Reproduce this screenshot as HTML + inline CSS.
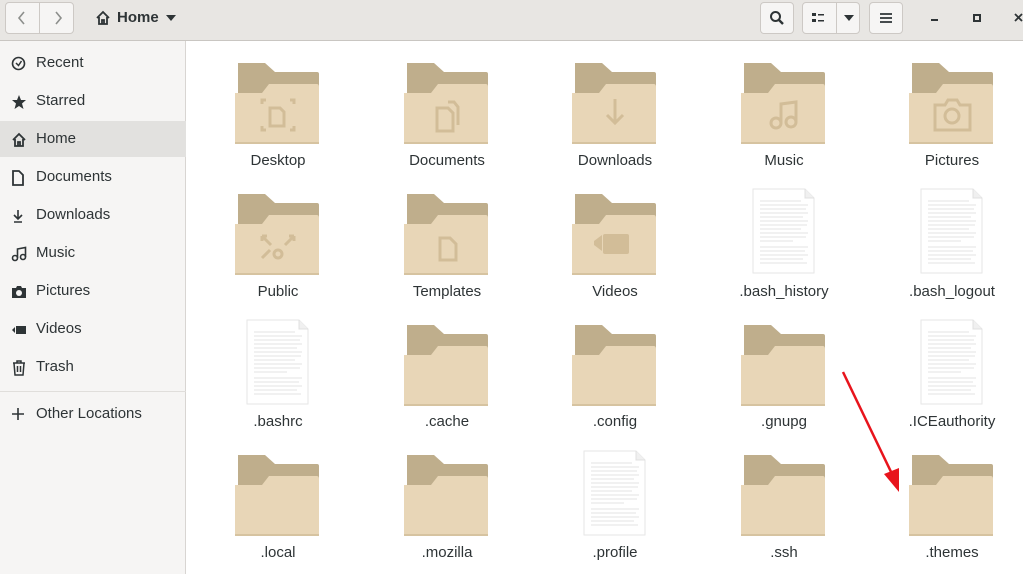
<!DOCTYPE html>
<html><head><meta charset="utf-8"><style>
*{margin:0;padding:0;box-sizing:border-box}
body{width:1023px;height:574px;overflow:hidden;font-family:"Liberation Sans","DejaVu Sans",sans-serif;background:#fff;position:relative;color:#2e3436}
.hdr{position:absolute;left:0;top:0;width:1023px;height:41px;background:#e8e6e3;border-bottom:1px solid #c9c6c2}
.btn{position:absolute;top:2px;height:32px;background:#f6f5f4;border:1px solid #cdc9c5;border-radius:4px}
.side{position:absolute;left:0;top:41px;width:186px;height:533px;background:#f6f5f4;border-right:1px solid #d8d5d2}
.it{position:absolute;left:0;width:186px;height:36px;font-size:15px;line-height:36px;padding-left:36px}
.it svg{position:absolute;left:11px;top:11px}
.sel{background:#e2e1df}
.lbl{position:absolute;width:160px;text-align:center;font-size:15px;color:#2e3436}
.ic{position:absolute}
</style></head><body>
<div class="hdr">
 <div class="btn" style="left:5px;width:69px"></div>
 <div style="position:absolute;left:39px;top:3px;width:1px;height:31px;background:#cdc9c5"></div>
 <svg class="ic" style="left:14px;top:9px" width="60" height="18"><path d="M10 3 L5 9 L10 15" stroke="#8d8f8c" stroke-width="1.6" fill="none"/><path d="M42 3 L47 9 L42 15" stroke="#8d8f8c" stroke-width="1.6" fill="none"/></svg>
 <svg class="ic" style="left:95px;top:10px" width="16" height="16"><path d="M2 8 L8 2 L14 8 M4 7 V14 H12 V7 M7 14 V10 H9 V14" stroke="#2e3436" stroke-width="1.8" fill="none"/></svg>
 <div style="position:absolute;left:117px;top:9px;font-size:15px;font-weight:bold;color:#2e3436">Home</div>
 <svg class="ic" style="left:165px;top:14px" width="12" height="8"><path d="M1 1 H11 L6 7Z" fill="#2e3436"/></svg>
 <div class="btn" style="left:760px;width:34px"></div>
 <svg class="ic" style="left:768px;top:9px" width="18" height="18"><circle cx="7.5" cy="7.5" r="4.5" stroke="#2e3436" stroke-width="2" fill="none"/><path d="M11 11 L15 15" stroke="#2e3436" stroke-width="2.4"/></svg>
 <div class="btn" style="left:802px;width:58px"></div>
 <div style="position:absolute;left:836px;top:3px;width:1px;height:31px;background:#cdc9c5"></div>
 <svg class="ic" style="left:812px;top:12px" width="16" height="12"><rect x="0" y="1" width="4" height="3" fill="#2e3436"/><rect x="0" y="7" width="4" height="3" fill="#2e3436"/><rect x="6" y="2" width="6" height="1.5" fill="#2e3436"/><rect x="6" y="8" width="6" height="1.5" fill="#2e3436"/></svg>
 <svg class="ic" style="left:843px;top:14px" width="12" height="8"><path d="M1 1 H11 L6 7Z" fill="#2e3436"/></svg>
 <div class="btn" style="left:869px;width:34px"></div>
 <svg class="ic" style="left:879px;top:11px" width="14" height="14"><path d="M1 3H13M1 7H13M1 11H13" stroke="#2e3436" stroke-width="1.7"/></svg>
 <div style="position:absolute;left:931px;top:19px;width:7px;height:2px;background:#2e3436"></div>
 <div style="position:absolute;left:973px;top:14px;width:8px;height:8px;border:2px solid #2e3436"></div>
 <svg class="ic" style="left:1014px;top:13px" width="9" height="9"><path d="M1 1 L8 8 M8 1 L1 8" stroke="#2e3436" stroke-width="1.8"/></svg>
</div>
<div class="side">
 <div class="it" style="top:4px"><svg width="15" height="15"><circle cx="7.5" cy="7.5" r="6" stroke="#2e3436" stroke-width="1.6" fill="none"/><path d="M5 7 L7.5 9.5 L10.5 5" stroke="#2e3436" stroke-width="1.5" fill="none"/></svg>Recent</div>
 <div class="it" style="top:42px"><svg width="16" height="16"><path d="M8 1 L10 6 L15 6 L11 9.5 L12.5 15 L8 12 L3.5 15 L5 9.5 L1 6 L6 6Z" fill="#2e3436"/></svg>Starred</div>
 <div class="it sel" style="top:80px"><svg width="16" height="16"><path d="M2 8 L8 2 L14 8 M4 7 V14 H12 V7 M7 14 V10 H9 V14" stroke="#2e3436" stroke-width="1.8" fill="none"/></svg>Home</div>
 <div class="it" style="top:118px"><svg width="14" height="16"><path d="M2 1 H8 L12 5 V15 H2Z" stroke="#2e3436" stroke-width="1.8" fill="none"/></svg>Documents</div>
 <div class="it" style="top:156px"><svg width="14" height="16"><path d="M7 2 V11 M3 7 L7 11 L11 7 M3 14 H11" stroke="#2e3436" stroke-width="1.6" fill="none"/></svg>Downloads</div>
 <div class="it" style="top:194px"><svg width="16" height="16"><circle cx="4" cy="12" r="2.5" stroke="#2e3436" stroke-width="1.6" fill="none"/><circle cx="12" cy="11" r="2.5" stroke="#2e3436" stroke-width="1.6" fill="none"/><path d="M6.5 12 V3 L14.5 1.5 V11" stroke="#2e3436" stroke-width="1.6" fill="none"/></svg>Music</div>
 <div class="it" style="top:232px"><svg width="16" height="16"><path d="M1 4 H5 L6 2 H10 L11 4 H15 V14 H1Z" fill="#2e3436"/><circle cx="8" cy="9" r="3" fill="#f6f5f4"/></svg>Pictures</div>
 <div class="it" style="top:270px"><svg width="16" height="16"><path d="M1 8 L4 5 V11Z" fill="#2e3436"/><rect x="5" y="4" width="10" height="8" fill="#2e3436"/></svg>Videos</div>
 <div class="it" style="top:308px"><svg width="16" height="16"><path d="M2 3 H14 M6 3 V1 H10 V3 M3 3 L4 15 H12 L13 3 M6.5 6 V12 M9.5 6 V12" stroke="#2e3436" stroke-width="1.5" fill="none"/></svg>Trash</div>
 <div style="position:absolute;left:0;top:350px;width:186px;height:1px;background:#e0dedb"></div>
 <div class="it" style="top:355px"><svg width="14" height="14"><path d="M7 1 V13 M1 7 H13" stroke="#2e3436" stroke-width="1.6"/></svg>Other Locations</div>
</div>
<svg width="1023" height="574" style="position:absolute;left:0;top:0">
<defs>
<g id="f">
 <path d="M3 0 H30 L40 9 H82 Q84 9 84 11 V30 H3Z" fill="#bfae8c"/>
 <path d="M0 30 H27 L34 21 H82 Q84 21 84 24 V79 Q84 81 82 81 H2 Q0 81 0 79Z" fill="#e8d6b7"/>
 <rect x="0" y="79" width="84" height="2" fill="#d6c3a0"/>
</g>
<g id="d">
 <path d="M0 0 H52 L61 9 V84 H0Z" fill="#fff" stroke="#e6e6e6"/>
 <path d="M52 0 V9 H61" fill="#f0f0f0" stroke="#e0e0e0"/>
 <g stroke="#dadada" stroke-width="0.8">
 <path d="M7 12H48M7 16H55M7 20H53M7 24H55M7 28H50M7 32H55M7 36H54M7 40H48M7 44H55M7 48H53M7 52H40M7 58H55M7 62H52M7 66H55M7 70H50M7 74H54"/>
 </g>
</g>
</defs>
<use href="#f" x="235" y="63"/><use href="#f" x="404" y="63"/><use href="#f" x="572" y="63"/><use href="#f" x="741" y="63"/><use href="#f" x="909" y="63"/>
<use href="#f" x="235" y="194"/><use href="#f" x="404" y="194"/><use href="#f" x="572" y="194"/>
<use href="#d" x="753" y="189"/><use href="#d" x="921" y="189"/>
<use href="#d" x="247" y="320"/><use href="#f" x="404" y="325"/><use href="#f" x="572" y="325"/><use href="#f" x="741" y="325"/><use href="#d" x="921" y="320"/>
<use href="#f" x="235" y="455"/><use href="#f" x="404" y="455"/><use href="#d" x="584" y="451"/><use href="#f" x="741" y="455"/><use href="#f" x="909" y="455"/>
<g fill="none" stroke="#d2bd98" stroke-width="3">
 <path d="M270 108 H280 L284 112 V126 H270Z"/>
 <path d="M262 104 V100 H266 M290 100 H294 V104 M262 126 V130 H266 M294 126 V130 H290"/>
 <path d="M437 108 H448 L453 113 V131 H437Z M448 102 H454 L458 107 V125"/>
 <path d="M615 99 V122 M607 115 L615 123 L623 115"/>
 <circle cx="776" cy="123" r="5"/><circle cx="791" cy="122" r="5"/><path d="M781 123 V104 L796 102 V122"/>
 <path d="M935 105 H945 L948 100 H957 L960 105 H970 V130 H935Z"/><circle cx="952" cy="116" r="7"/>
 <circle cx="278" cy="254" r="4"/><path d="M262 236 H267 M262 236 V241 M294 236 H289 M294 236 V241 M263 237 L271 245 M293 237 L285 245 M262 258 L270 250"/>
 <path d="M440 238 H450 L456 244 V260 H440Z"/>
</g>
<path d="M594 241 L602 235 V251 L594 245Z" fill="#d2bd98"/><rect x="603" y="234" width="26" height="20" rx="2" fill="#d2bd98"/>
<path d="M843 372 L893 476" stroke="#e8141c" stroke-width="2.5"/>
<path d="M899 492 L884 474 L899 468Z" fill="#e8141c"/>
</svg>
<div class="lbl" style="left:198px;top:152px">Desktop</div>
<div class="lbl" style="left:367px;top:152px">Documents</div>
<div class="lbl" style="left:535px;top:152px">Downloads</div>
<div class="lbl" style="left:704px;top:152px">Music</div>
<div class="lbl" style="left:872px;top:152px">Pictures</div>
<div class="lbl" style="left:198px;top:283px">Public</div>
<div class="lbl" style="left:367px;top:283px">Templates</div>
<div class="lbl" style="left:535px;top:283px">Videos</div>
<div class="lbl" style="left:704px;top:283px">.bash_history</div>
<div class="lbl" style="left:872px;top:283px">.bash_logout</div>
<div class="lbl" style="left:198px;top:413px">.bashrc</div>
<div class="lbl" style="left:367px;top:413px">.cache</div>
<div class="lbl" style="left:535px;top:413px">.config</div>
<div class="lbl" style="left:704px;top:413px">.gnupg</div>
<div class="lbl" style="left:872px;top:413px">.ICEauthority</div>
<div class="lbl" style="left:198px;top:544px">.local</div>
<div class="lbl" style="left:367px;top:544px">.mozilla</div>
<div class="lbl" style="left:535px;top:544px">.profile</div>
<div class="lbl" style="left:704px;top:544px">.ssh</div>
<div class="lbl" style="left:872px;top:544px">.themes</div>
</body></html>
